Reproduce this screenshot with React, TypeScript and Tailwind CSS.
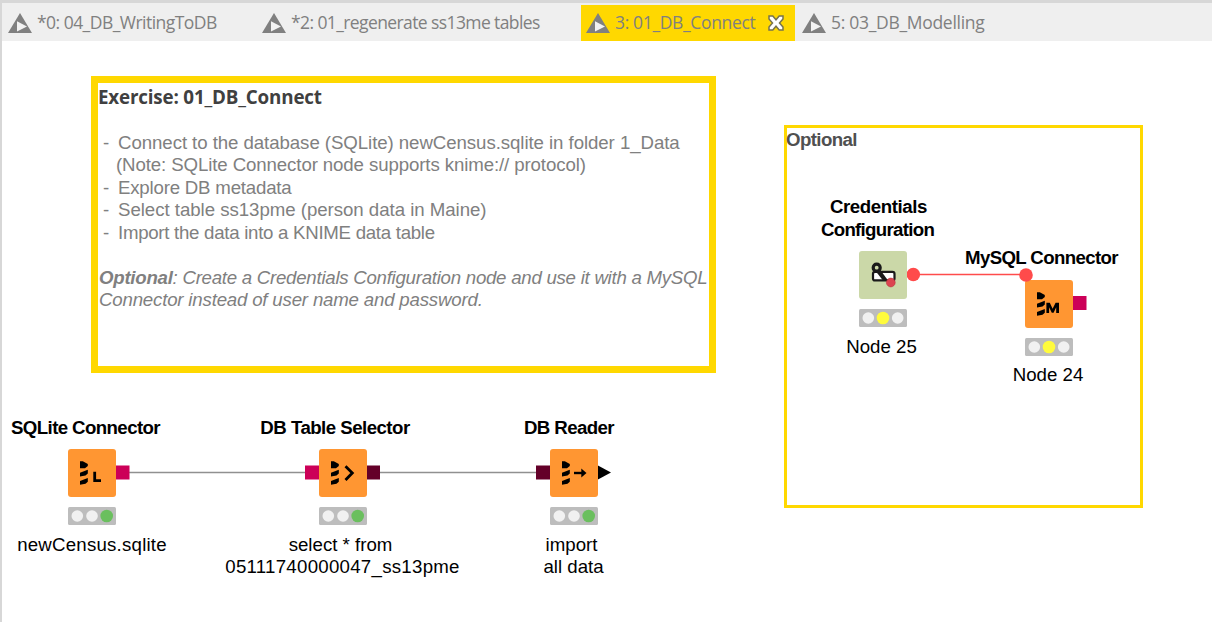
import type { ReactNode } from "react";

const KnimeIcon = () => (
  <svg className="h-5 w-6 shrink-0" viewBox="0 0 24 20">
    <path d="M12 0 L24 20 H0 Z" fill="#808080" />
    <path d="M9 8.2 L19 13.6 L9 18.4 Z" fill="#f2f2f2" />
  </svg>
);

const CloseIcon = () => (
  <svg className="h-4 w-4 shrink-0" viewBox="0 0 16 16">
    <path
      d="M1 1 H4.8 L8 4.8 L11.2 1 H15 V4 L11.5 8 L15 12 V15 H11.2 L8 11.2 L4.8 15 H1 V12 L4.5 8 L1 4 Z"
      fill="#fff"
      stroke="#77734d"
      strokeWidth="1.5"
    />
  </svg>
);

const Drill = () => (
  <g>
    <path d="M12 12.2 H14.8 L19.8 15 V17 L17 19.2 H12 Z" />
    <path d="M12 23.8 L19.8 20.8 V24.6 L17.5 26.6 L12 27.6 Z" />
    <path d="M12 32 L19.8 29 V32.8 L17.5 34.8 L12 35.8 Z" />
  </g>
);

type Kind = "L" | "select" | "read" | "M" | "cred";

const Glyph = ({ kind }: { kind: Kind }) => (
  <svg className="block h-12 w-12" viewBox="0 0 48 48">
    {kind !== "cred" && <Drill />}
    {kind === "L" && <path d="M26.7 22.8 V31.6 H33" fill="none" stroke="#000" strokeWidth="2.8" />}
    {kind === "M" && (
      <path d="M21.4 33 V22.8 H24.8 L27.6 28.8 L30.6 22.8 H34 V33 H31.2 V27.2 L28.6 32.8 H26.8 L24.1 27.2 V33 Z" />
    )}
    {kind === "select" && (
      <path d="M26.5 17.3 L33.3 24 L26.5 31" fill="none" stroke="#000" strokeWidth="2.8" />
    )}
    {kind === "read" && (
      <g>
        <path d="M24 24 H33" stroke="#000" strokeWidth="2.4" />
        <path d="M31.3 19.4 L36.5 24 L31.3 28.6 Z" />
      </g>
    )}
    {kind === "cred" && (
      <g>
        <rect x="14" y="20.8" width="21.5" height="8.6" rx="2" fill="#fff" stroke="#1a1a1a" strokeWidth="2.2" />
        <circle cx="17.7" cy="16.7" r="3.5" fill="#cbd8a8" stroke="#1a1a1a" strokeWidth="3.2" />
        <path d="M16.5 20 L21 18.5 L29 29.5 L24 29.5 Z" fill="#1a1a1a" />
        <circle cx="31.8" cy="31.5" r="4.4" fill="#dc4450" stroke="#b8323d" strokeWidth="0.6" />
      </g>
    )}
  </svg>
);

const Lights = ({ on }: { on: "yellow" | "green" }) => (
  <svg className="block h-[18px] w-12" viewBox="0 0 48 18">
    <rect width="48" height="18" rx="1.5" fill="#bdbdbd" />
    <circle cx="9.3" cy="9" r="5.8" fill="#f1f1f1" />
    <circle cx="24" cy="9" r={on === "yellow" ? 6.3 : 5.8} fill={on === "yellow" ? "#fffb3c" : "#f1f1f1"} />
    <circle cx="38.7" cy="9" r={on === "green" ? 6.3 : 5.8} fill={on === "green" ? "#6abf5e" : "#f1f1f1"} />
  </svg>
);

type NodeProps = { place: string; kind: Kind; on: "yellow" | "green"; title: ReactNode; caption: ReactNode };

const WorkflowNode = ({ place, kind, on, title, caption }: NodeProps) => (
  <div className={`absolute flex w-60 flex-col items-center text-center text-[18.67px] leading-[22.5px] whitespace-nowrap text-black ${place}`}>
    <div className="mb-2.5 flex h-[45px] flex-col items-center justify-end font-bold">{title}</div>
    <div className={`rounded-[3px] ${kind === "cred" ? "bg-[#cbd8a8]" : "bg-[#ff9632]"}`}>
      <Glyph kind={kind} />
    </div>
    <div className="mt-[10.4px] mb-[8.6px]">
      <Lights on={on} />
    </div>
    {caption}
  </div>
);

const Tab = ({ className, children, active }: { className: string; children: string; active?: boolean }) => (
  <div className={`flex h-9 shrink-0 items-center whitespace-nowrap ${active ? "bg-[#ffd800]" : ""} ${className}`}>
    <KnimeIcon />
    <span className="ml-[5px]">{children}</span>
    {active && (
      <span className="ml-auto">
        <CloseIcon />
      </span>
    )}
  </div>
);

export default function App() {
  return (
    <div className="flex h-[622px] w-[1212px] flex-col overflow-hidden border-t-[3px] border-l-2 border-[#d7d7d7] bg-white font-['Liberation_Sans',sans-serif]">
      <nav className="flex h-[38px] shrink-0 items-center bg-[#efefef] pt-px font-['Open_Sans',sans-serif] text-[17.5px] text-[#808080]">
        <Tab className="w-[253px] pl-1.5 tracking-[-0.53px]">*0: 04_DB_WritingToDB</Tab>
        <Tab className="w-[326px] pl-[7px] tracking-[-0.6px]">*2: 01_regenerate ss13me tables</Tab>
        <Tab active className="w-[214px] pr-[11px] pl-[5px] tracking-[-0.35px]">3: 01_DB_Connect</Tab>
        <Tab className="pl-[7px] tracking-[-0.3px]">5: 03_DB_Modelling</Tab>
      </nav>
      <main className="relative flex-1">
        <section className="absolute top-[35px] left-[89px] h-[297px] w-[625px] border-[7px] border-[#ffd800] text-[18.67px] leading-[22.5px] whitespace-pre text-[#808080]">
          <h1 className="mt-[3px] h-[45.6px] font-['Open_Sans',sans-serif] text-[18.8px] font-bold tracking-[-0.17px] text-[#404040]">
            Exercise: 01_DB_Connect
          </h1>
          <ul className="pl-[5px]">
            <li className="flex tracking-[-0.07px]"><span className="w-[15px]">-</span><span>Connect to the database (SQLite) newCensus.sqlite in folder 1_Data</span></li>
            <li className="pl-[13px] tracking-[-0.11px]">(Note: SQLite Connector node supports knime:// protocol)</li>
            <li className="flex tracking-[-0.2px]"><span className="w-[15px]">-</span><span>Explore DB metadata</span></li>
            <li className="flex tracking-[-0.04px]"><span className="w-[15px]">-</span><span>Select table ss13pme (person data in Maine)</span></li>
            <li className="flex tracking-[-0.28px]"><span className="w-[15px]">-</span><span>Import the data into a KNIME data table</span></li>
          </ul>
          <div className="mt-[22.5px] pl-px italic">
            <p className="tracking-[-0.26px]"><b>Optional</b>: Create a Credentials Configuration node and use it with a MySQL</p>
            <p className="tracking-[-0.19px]">Connector instead of user name and password.</p>
          </div>
        </section>

        <section className="absolute top-[84px] left-[782px] h-[383px] w-[359px] border-[3px] border-[#ffd800] pt-px text-[18.67px] leading-[22.5px] font-bold tracking-[-0.6px] text-[#505050]">
          <span className="-ml-px">Optional</span>
        </section>

        <svg className="absolute top-0 left-0 h-[581px] w-[1210px]" viewBox="2 41 1210 581">
          <path d="M129 472.5 H306 M380 472.5 H536" stroke="#909090" strokeWidth="1.4" />
          <path d="M116 465.5 h13.5 v14 h-13.5 Z M305 465.5 h14 v14 h-14 Z M1073 296 h13.5 v14 h-13.5 Z" fill="#cc0058" />
          <path d="M366 465.5 h14 v14 h-14 Z M536 465.5 h14 v14 h-14 Z" fill="#640029" />
          <path d="M597 465 L611 472.5 L597 480 Z" />
          <path d="M913 274.5 H1026" stroke="#ff4b4b" strokeWidth="1.5" />
          <circle cx="913.3" cy="274.5" r="6.8" fill="#ff4b4b" />
        </svg>

        <WorkflowNode place="left-[-30px] top-[353px]" kind="L" on="green"
          title={<span className="relative left-[-6.5px] tracking-[-0.6px]">SQLite Connector</span>}
          caption={<span className="tracking-[0.22px]">newCensus.sqlite</span>} />
        <WorkflowNode place="left-[220.5px] top-[353px]" kind="select" on="green"
          title={<span className="relative left-[-7.5px] tracking-[-0.53px]">DB Table Selector</span>}
          caption={<><span className="relative left-[-2px]">select * from</span><span className="tracking-[0.27px]">05111740000047_ss13pme</span></>} />
        <WorkflowNode place="left-[451.5px] top-[353px]" kind="read" on="green"
          title={<span className="relative left-[-4.5px] tracking-[-0.6px]">DB Reader</span>}
          caption={<><span className="relative left-[-2px]">import</span><span>all data</span></>} />
        <WorkflowNode place="left-[760.5px] top-[155px]" kind="cred" on="yellow"
          title={<><span className="relative left-[-4px] tracking-[-0.4px]">Credentials</span><span className="relative left-[-5px] tracking-[-0.7px]">Configuration</span></>}
          caption={<span className="relative left-[-1px]">Node 25</span>} />
        <WorkflowNode place="left-[927px] top-[183.5px]" kind="M" on="yellow"
          title={<span className="relative left-[-7.5px] tracking-[-0.63px]">MySQL Connector</span>}
          caption={<span className="relative left-[-1px]">Node 24</span>} />
        <svg className="absolute top-[226.5px] left-[1017px] h-[14px] w-[14px]" viewBox="0 0 14 14">
          <circle cx="7" cy="7" r="6.8" fill="#ff4b4b" />
        </svg>
      </main>
    </div>
  );
}
